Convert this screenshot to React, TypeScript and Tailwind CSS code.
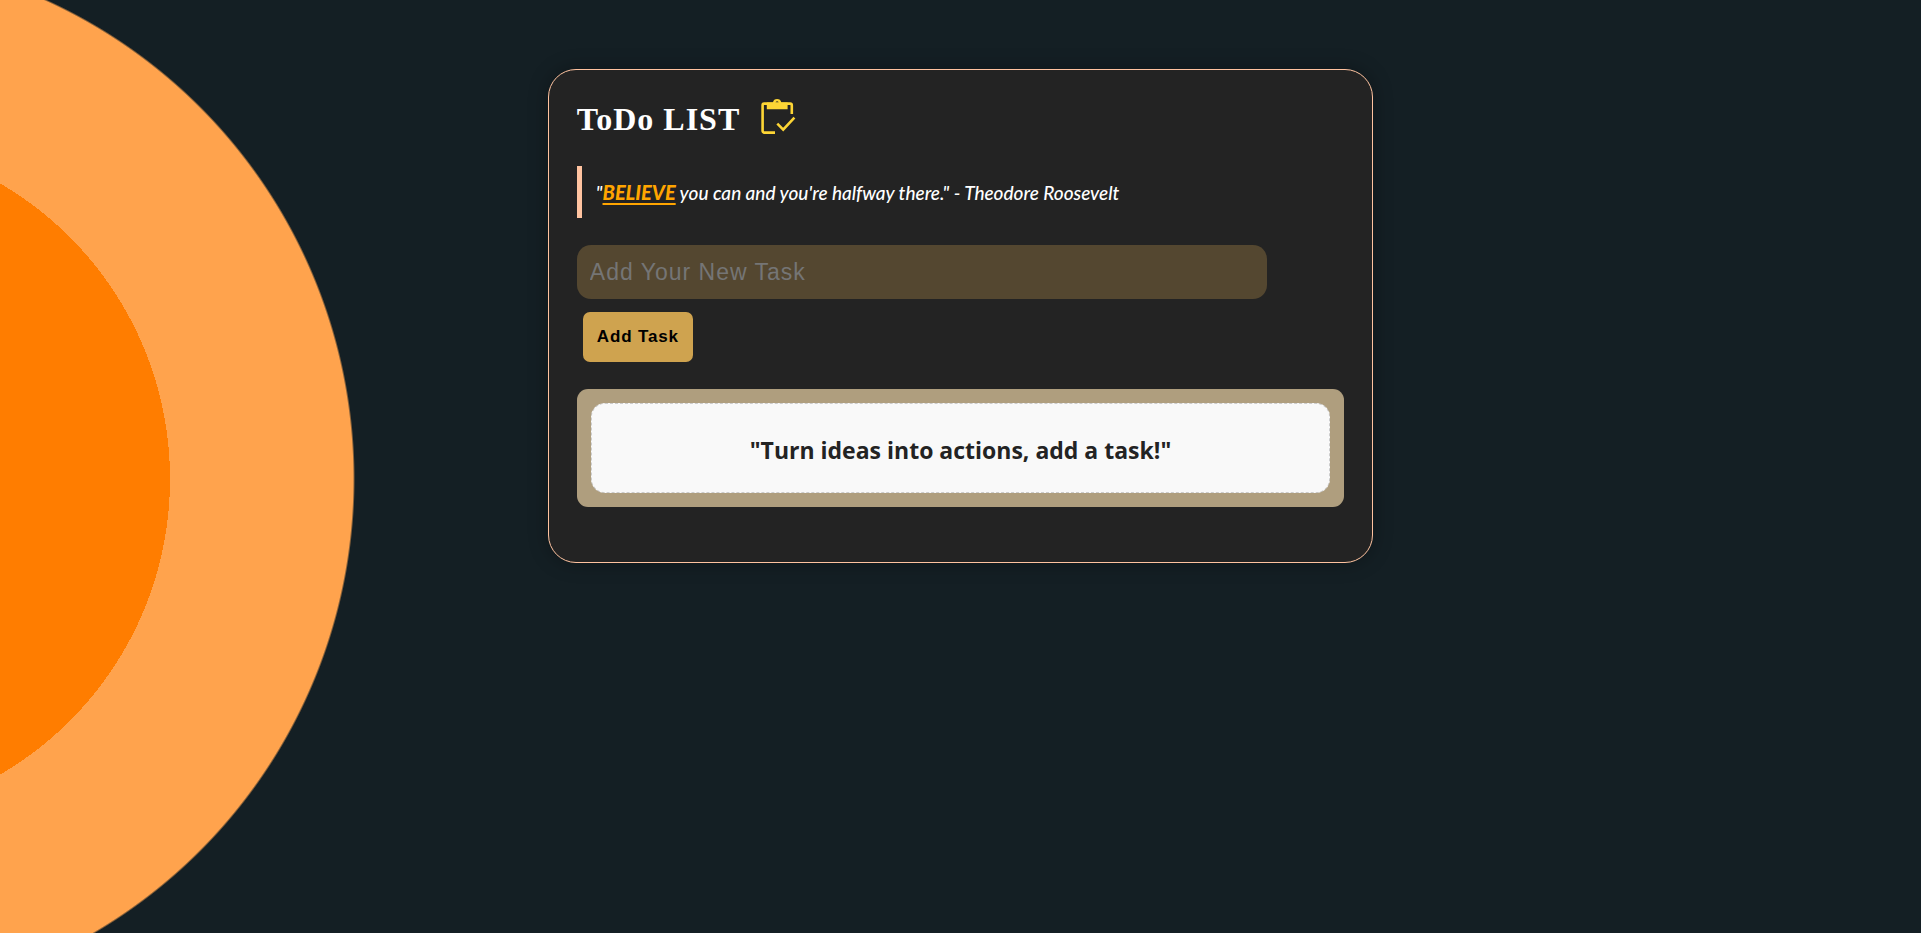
import { useState, type FormEvent } from "react";

function ClipboardCheckIcon() {
  return (
    <svg viewBox="0 0 36 37" className="h-[37px] w-9" fill="none" stroke="#fdd535" strokeWidth="2.6" aria-hidden="true">
      <path d="M15 34.6H4.2a1.6 1.6 0 0 1-1.6-1.6V7.2a1.6 1.6 0 0 1 1.6-1.6h26a1.6 1.6 0 0 1 1.6 1.6V16" />
      <path
        d="M6.8 4.4h6.1a4.3 4.3 0 0 1 8.4 0h6.3v6.8H6.8zM17.1 3.3a1.6 1.6 0 1 0 0 3.2 1.6 1.6 0 0 0 0-3.2z"
        fill="#fdd535"
        fillRule="evenodd"
        stroke="none"
      />
      <path d="M17.3 25.7l5.9 5.9 11.2-12" />
    </svg>
  );
}

export default function App() {
  const [task, setTask] = useState("");
  const [tasks, setTasks] = useState<string[]>([]);

  const addTask = (event: FormEvent) => {
    event.preventDefault();
    const text = task.trim();
    if (!text) return;
    setTasks([...tasks, text]);
    setTask("");
  };

  return (
    <div className="flex min-h-screen flex-col items-center bg-[#141f24] bg-[radial-gradient(circle_at_-172px_479px,#ff7d00_342px,#ffa34d_342px,#ffa34d_525px,transparent_527px)] pt-[69px]">
      <main className="w-[calc(40%+57px)] rounded-[28px] border border-[#ffc3a0] bg-[#232323] px-7 pt-7 pb-[55px] shadow-[0_0_20px_rgba(0,0,0,0.3)]">
        <header className="flex items-start gap-5">
          <h1 className="font-['Liberation_Serif',serif] text-[32px] leading-[42px] font-bold tracking-[1px] text-white">
            ToDo LIST
          </h1>
          <ClipboardCheckIcon />
        </header>

        <blockquote className="mt-[26px] flex h-[52px] items-center border-l-[5px] border-[#ffc3a0] pl-3.5 font-['Lato',sans-serif] text-[19px] font-medium text-white italic">
          <p>
            "
            <strong className="text-[20px] font-black text-[#ffa500] underline decoration-2 underline-offset-3">
              BELIEVE
            </strong>
            {" you can and you're halfway there.\" - Theodore Roosevelt"}
          </p>
        </blockquote>

        <form onSubmit={addTask} className="mt-[27px] flex flex-col items-start gap-[13px]">
          <input
            type="text"
            aria-label="New task"
            placeholder="Add Your New Task"
            value={task}
            onChange={(event) => setTask(event.target.value)}
            className="h-[54px] w-[90%] rounded-[14px] bg-[#544730] px-[13px] font-['Liberation_Sans',sans-serif] text-[23px] tracking-[1px] text-white outline-none placeholder:text-[#757575]"
          />
          <button
            type="submit"
            className="ml-1.5 h-[50px] cursor-pointer rounded-[7px] bg-[#cfa34f] px-3.5 font-['Liberation_Sans',sans-serif] text-[17px] font-bold tracking-wider text-black"
          >
            Add Task
          </button>
        </form>

        <section aria-label="Tasks" className="mt-[27px] rounded-[11px] bg-[#af9e7e] p-3.5">
          {tasks.length === 0 ? (
            <p className="rounded-[14px] border border-dashed border-[#cccccc] bg-[#f9f9f9] px-4 pt-[30px] pb-[26px] text-center font-['Open_Sans',sans-serif] text-[23px] leading-8 font-bold text-[#232323]">
              "Turn ideas into actions, add a task!"
            </p>
          ) : (
            <ul className="flex flex-col gap-2 font-['Open_Sans',sans-serif] text-lg text-[#232323]">
              {tasks.map((item, index) => (
                <li key={index} className="rounded-[14px] bg-[#f9f9f9] px-4 py-3">
                  {item}
                </li>
              ))}
            </ul>
          )}
        </section>
      </main>
    </div>
  );
}
